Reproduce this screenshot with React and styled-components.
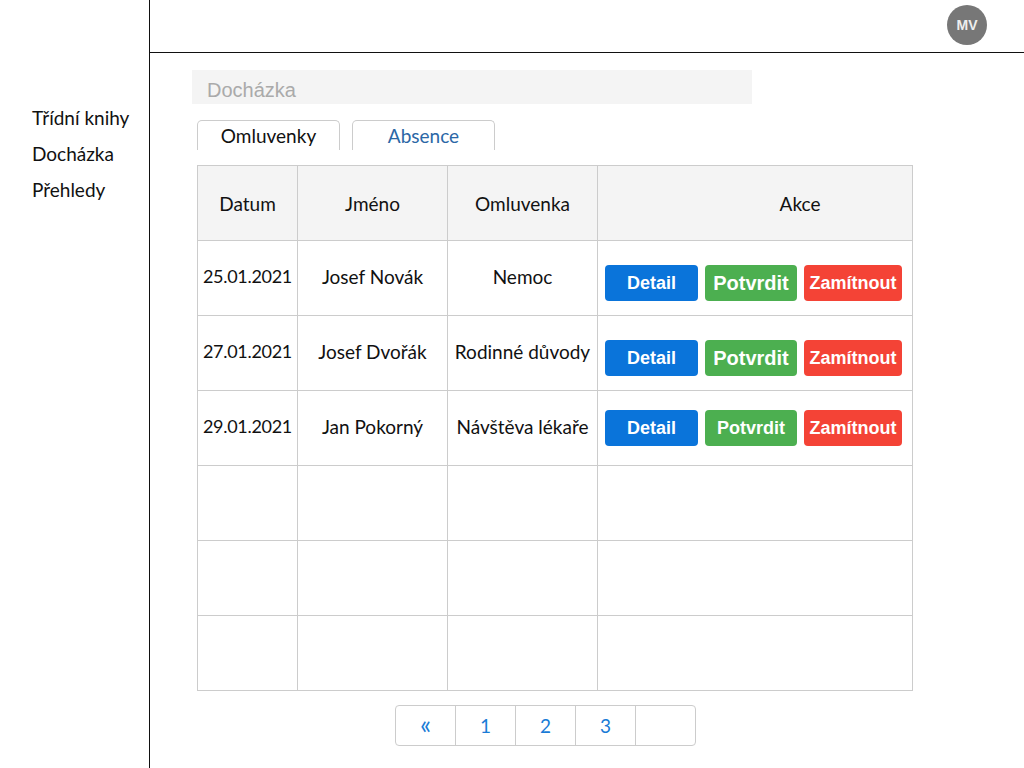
import styled, { createGlobalStyle } from "styled-components";

const GlobalStyle = createGlobalStyle`
  * { box-sizing: border-box; }
  body {
    margin: 0;
    font-family: "Lato", "Liberation Sans", sans-serif;
    color: #111;
    background: #fff;
  }
`;

const Page = styled.div`
  display: flex;
  width: 1024px;
  height: 768px;
  overflow: hidden;
`;

const Sidebar = styled.nav`
  width: 150px;
  flex-shrink: 0;
  border-right: 1px solid #111;
  padding: 100px 0 0 32px;
`;

const NavItem = styled.div`
  font-size: 19px;
  line-height: 36px;
  color: #111;
  white-space: nowrap;
`;

const Main = styled.div`
  flex: 1;
  display: flex;
  flex-direction: column;
`;

const Header = styled.header`
  height: 53px;
  border-bottom: 1px solid #111;
  display: flex;
  justify-content: flex-end;
  align-items: flex-start;
  padding: 5px 37px 0 0;
`;

const Avatar = styled.div`
  width: 40px;
  height: 40px;
  border-radius: 50%;
  background: #777;
  color: #eee;
  font-family: "Liberation Sans", Arial, sans-serif;
  font-weight: bold;
  font-size: 14px;
  display: flex;
  align-items: center;
  justify-content: center;
`;

const Content = styled.main`
  padding: 17px 0 0 42px;
`;

const TitleBar = styled.div`
  width: 560px;
  height: 34px;
  background: #f4f4f4;
  color: #aaa;
  font-family: "Liberation Sans", Arial, sans-serif;
  font-size: 20px;
  line-height: 34px;
  padding: 3px 0 0 15px;
`;

const Tabs = styled.div`
  display: flex;
  gap: 12px;
  margin: 16px 0 0 5px;
`;

const Tab = styled.div`
  width: 143px;
  height: 30px;
  border: 1px solid #ccc;
  border-bottom: none;
  border-radius: 5px 5px 0 0;
  display: flex;
  align-items: center;
  justify-content: center;
  font-size: 19px;
  color: ${(props) => (props.active ? "#111" : "#2b67a6")};
`;

const Table = styled.table`
  margin: 15px 0 0 5px;
  border-collapse: collapse;
  table-layout: fixed;
  width: 715px;
`;

const Th = styled.th`
  height: 75px;
  background: #f4f4f4;
  border: 1px solid #ccc;
  font-weight: normal;
  font-size: 19px;
  text-align: center;
  padding: 0 0 0 ${(props) => props.pad || 0}px;
  width: ${(props) => props.w}px;
`;

const Td = styled.td`
  height: 75px;
  border: 1px solid #ccc;
  font-size: ${(props) => (props.date ? 18 : 19)}px;
  letter-spacing: ${(props) => (props.date ? "-0.3px" : "normal")};
  text-align: center;
  white-space: nowrap;
  padding: 0 0 4px;
`;

const ActionCell = styled.td`
  height: 75px;
  border: 1px solid #ccc;
  padding: ${(props) => props.shift}px 0 0 7px;
`;

const Actions = styled.div`
  display: flex;
  gap: 7px;
`;

const Button = styled.button`
  height: 36px;
  width: ${(props) => props.w}px;
  border: none;
  border-radius: 4px;
  background: ${(props) => props.bg};
  color: #fff;
  font-family: "Liberation Sans", Arial, sans-serif;
  font-weight: bold;
  font-size: ${(props) => props.size}px;
  padding: 0;
  display: flex;
  align-items: center;
  justify-content: center;
`;

const Pagination = styled.div`
  display: flex;
  width: 301px;
  height: 41px;
  margin: 14px 0 0 203px;
  border: 1px solid #ccc;
  border-radius: 4px;
`;

const PageCell = styled.div`
  flex: 1;
  display: flex;
  align-items: center;
  justify-content: center;
  color: #1a7bd6;
  font-size: ${(props) => (props.arrow ? 26 : 19)}px;
  padding-bottom: ${(props) => (props.arrow ? 3 : 0)}px;
  border-left: ${(props) => (props.arrow ? "none" : "1px solid #ccc")};
`;

const rows = [
  { date: "25.01.2021", name: "Josef Novák", reason: "Nemoc", shift: 10, big: true },
  { date: "27.01.2021", name: "Josef Dvořák", reason: "Rodinné důvody", shift: 10, big: true },
  { date: "29.01.2021", name: "Jan Pokorný", reason: "Návštěva lékaře", shift: 0, big: false },
];

const App = () => {
  return (
    <Page>
      <GlobalStyle />
      <Sidebar>
        <NavItem>Třídní knihy</NavItem>
        <NavItem>Docházka</NavItem>
        <NavItem>Přehledy</NavItem>
      </Sidebar>
      <Main>
        <Header>
          <Avatar>MV</Avatar>
        </Header>
        <Content>
          <TitleBar>Docházka</TitleBar>
          <Tabs>
            <Tab active>Omluvenky</Tab>
            <Tab>Absence</Tab>
          </Tabs>
          <Table>
            <thead>
              <tr>
                <Th w={100}>Datum</Th>
                <Th w={150}>Jméno</Th>
                <Th w={150}>Omluvenka</Th>
                <Th w={315} pad={90}>Akce</Th>
              </tr>
            </thead>
            <tbody>
              {rows.map((row) => (
                <tr key={row.date}>
                  <Td date>{row.date}</Td>
                  <Td>{row.name}</Td>
                  <Td>{row.reason}</Td>
                  <ActionCell shift={row.shift}>
                    <Actions>
                      <Button w={93} size={18} bg="#0a74da">Detail</Button>
                      <Button w={92} size={row.big ? 20 : 18} bg="#4caf50">Potvrdit</Button>
                      <Button w={98} size={18} bg="#f44336">Zamítnout</Button>
                    </Actions>
                  </ActionCell>
                </tr>
              ))}
              {[0, 1, 2].map((i) => (
                <tr key={i}>
                  <Td />
                  <Td />
                  <Td />
                  <Td />
                </tr>
              ))}
            </tbody>
          </Table>
          <Pagination>
            <PageCell arrow>«</PageCell>
            <PageCell>1</PageCell>
            <PageCell>2</PageCell>
            <PageCell>3</PageCell>
            <PageCell />
          </Pagination>
        </Content>
      </Main>
    </Page>
  );
};

export default App;
